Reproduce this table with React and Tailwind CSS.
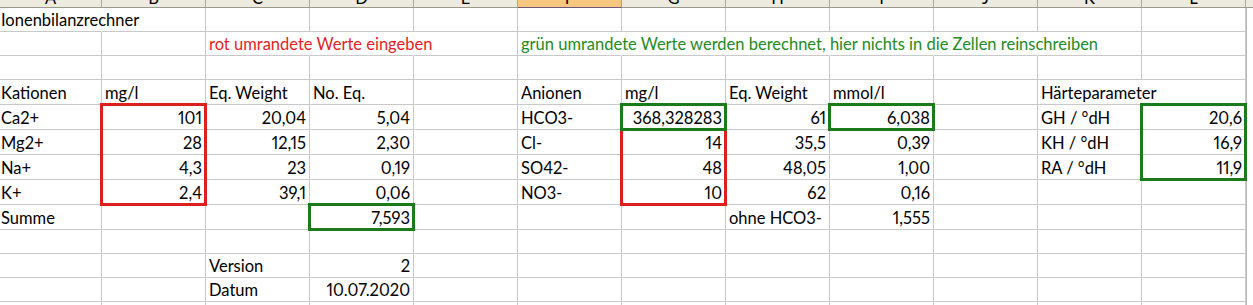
import React from "react";

// Column letters shown in the sheet header
const LETTERS = ["A", "B", "C", "D", "E", "F", "G", "H", "I", "J", "K", "L"];
const COL_W = [102, 104, 104, 104, 104, 104, 104, 104, 104, 104, 104, 104];
const COL_CLASS = (i) => (i === 0 ? "w-[102px]" : "w-[104px]");

const GREEN_TEXT = "text-[#248a24]";
const RED_TEXT = "text-[#e41e26]";

// Each row: height (including gridline), cell contents by column index,
// and the columns whose right gridline is hidden by overflowing text.
const ROWS = [
  { h: 24, cells: { 0: "Ionenbilanzrechner" }, open: [0] },
  {
    h: 24,
    cells: {
      2: { t: "rot umrandete Werte eingeben", c: "red" },
      5: {
        t: "grün umrandete Werte werden berechnet, hier nichts in die Zellen reinschreiben",
        c: "green",
      },
    },
    open: [2, 3, 5, 6, 7, 8, 9],
  },
  { h: 24, cells: {} },
  {
    h: 25,
    cells: {
      0: "Kationen",
      1: "mg/l",
      2: "Eq. Weight",
      3: "No. Eq.",
      5: "Anionen",
      6: "mg/l",
      7: "Eq. Weight",
      8: "mmol/l",
      10: "Härteparameter",
    },
    open: [10],
  },
  {
    h: 25,
    cells: {
      0: "Ca2+",
      1: "101",
      2: "20,04",
      3: "5,04",
      5: "HCO3-",
      6: "368,328283",
      7: "61",
      8: "6,038",
      10: "GH / °dH",
      11: "20,6",
    },
  },
  {
    h: 25,
    cells: {
      0: "Mg2+",
      1: "28",
      2: "12,15",
      3: "2,30",
      5: "Cl-",
      6: "14",
      7: "35,5",
      8: "0,39",
      10: "KH / °dH",
      11: "16,9",
    },
  },
  {
    h: 25,
    cells: {
      0: "Na+",
      1: "4,3",
      2: "23",
      3: "0,19",
      5: "SO42-",
      6: "48",
      7: "48,05",
      8: "1,00",
      10: "RA / °dH",
      11: "11,9",
    },
  },
  {
    h: 25,
    cells: {
      0: "K+",
      1: "2,4",
      2: "39,1",
      3: "0,06",
      5: "NO3-",
      6: "10",
      7: "62",
      8: "0,16",
    },
  },
  {
    h: 25,
    cells: { 0: "Summe", 3: "7,593", 7: "ohne HCO3-", 8: "1,555" },
  },
  { h: 24, cells: {} },
  { h: 24, cells: { 2: "Version", 3: "2" } },
  { h: 24, cells: { 2: "Datum", 3: "10.07.2020" } },
  { h: 4, cells: {} },
];

const HEADER_H = 8;

// Range borders: columns by index, rows counted from 1
const RANGES = [
  { c0: 1, c1: 1, r0: 5, r1: 8, color: "red" },
  { c0: 3, c1: 3, r0: 9, r1: 9, color: "green" },
  { c0: 6, c1: 6, r0: 6, r1: 8, color: "red" },
  { c0: 6, c1: 6, r0: 5, r1: 5, color: "green" },
  { c0: 8, c1: 8, r0: 5, r1: 5, color: "green" },
  { c0: 11, c1: 11, r0: 5, r1: 7, color: "green" },
];

// x of the gridline to the right of column i (i = -1 gives the sheet's left edge)
function lineX(i) {
  let x = -1;
  for (let k = 0; k <= i; k++) x += COL_W[k];
  return i < 0 ? -3 : x;
}

// y of the gridline below data row r (r = 0 is the header)
function lineY(r) {
  let y = HEADER_H;
  for (let k = 0; k < r; k++) y += ROWS[k].h;
  return y - 1;
}

const isNumber = (s) => /^[\d.,]+$/.test(s);

function Cell({ col, value, open, h }) {
  const spec = typeof value === "string" ? { t: value } : value;
  const text = spec ? spec.t : null;
  const right = text && isNumber(text);
  const color =
    spec && spec.c === "red" ? RED_TEXT : spec && spec.c === "green" ? GREEN_TEXT : "";
  return (
    <div
      className={[
        COL_CLASS(col),
        "shrink-0 flex items-end whitespace-nowrap border-b border-b-[#c9c9c9] border-r",
        open ? "border-r-white" : "border-r-[#c9c9c9]",
        right ? "justify-end pr-[3px]" : col === 0 ? "pl-[1px]" : "pl-[3px]",
        h < 10 ? "pb-0" : "pb-[3px]",
        color,
      ].join(" ")}
    >
      {text ? <span className="relative">{text}</span> : null}
    </div>
  );
}

function SheetRow({ row }) {
  const heightClass = row.h === 24 ? "h-[24px]" : row.h === 25 ? "h-[25px]" : "h-[4px]";
  return (
    <div className={`flex ${heightClass}`}>
      {LETTERS.map((_, i) => (
        <Cell
          key={i}
          col={i}
          value={row.cells[i]}
          open={row.open ? row.open.includes(i) : false}
          h={row.h}
        />
      ))}
      <div className="flex-1 border-l border-l-[#b9b9b9] bg-white" />
    </div>
  );
}

function HeaderRow() {
  return (
    <div className="flex h-[8px]">
      {LETTERS.map((l, i) => (
        <div
          key={l}
          className={[
            COL_CLASS(i),
            "shrink-0 overflow-hidden flex items-end justify-center pb-[1px] border-r border-b",
            i === 5
              ? "bg-[#f8c77f] border-r-[#b59a6a] border-b-[#6d5a7a]"
              : "bg-[#edebe0] border-r-[#a9a79c] border-b-[#9c9a8e]",
          ].join(" ")}
        >
          <span>{l}</span>
        </div>
      ))}
      <div className="flex-1 bg-[#edebe0] border-b border-b-[#9c9a8e]" />
    </div>
  );
}

function RangeBorder({ range }) {
  const L = lineX(range.c0 - 1);
  const R = lineX(range.c1);
  const T = lineY(range.r0 - 1);
  const B = lineY(range.r1);
  return (
    <div
      className={`absolute border-[3px] ${
        range.color === "red" ? "border-[#dc1f1f]" : "border-[#1b7a1b]"
      }`}
      style={{ left: L - 1, top: T - 1, width: R - L + 3, height: B - T + 3 }}
    />
  );
}

export default function App() {
  return (
    <div className="relative w-[1253px] h-[305px] overflow-hidden bg-white font-['Lato',sans-serif] text-[16.5px] leading-[16px] text-black proportional-nums">
      <HeaderRow />
      {ROWS.map((row, i) => (
        <SheetRow key={i} row={row} />
      ))}
      {RANGES.map((r, i) => (
        <RangeBorder key={i} range={r} />
      ))}
    </div>
  );
}
